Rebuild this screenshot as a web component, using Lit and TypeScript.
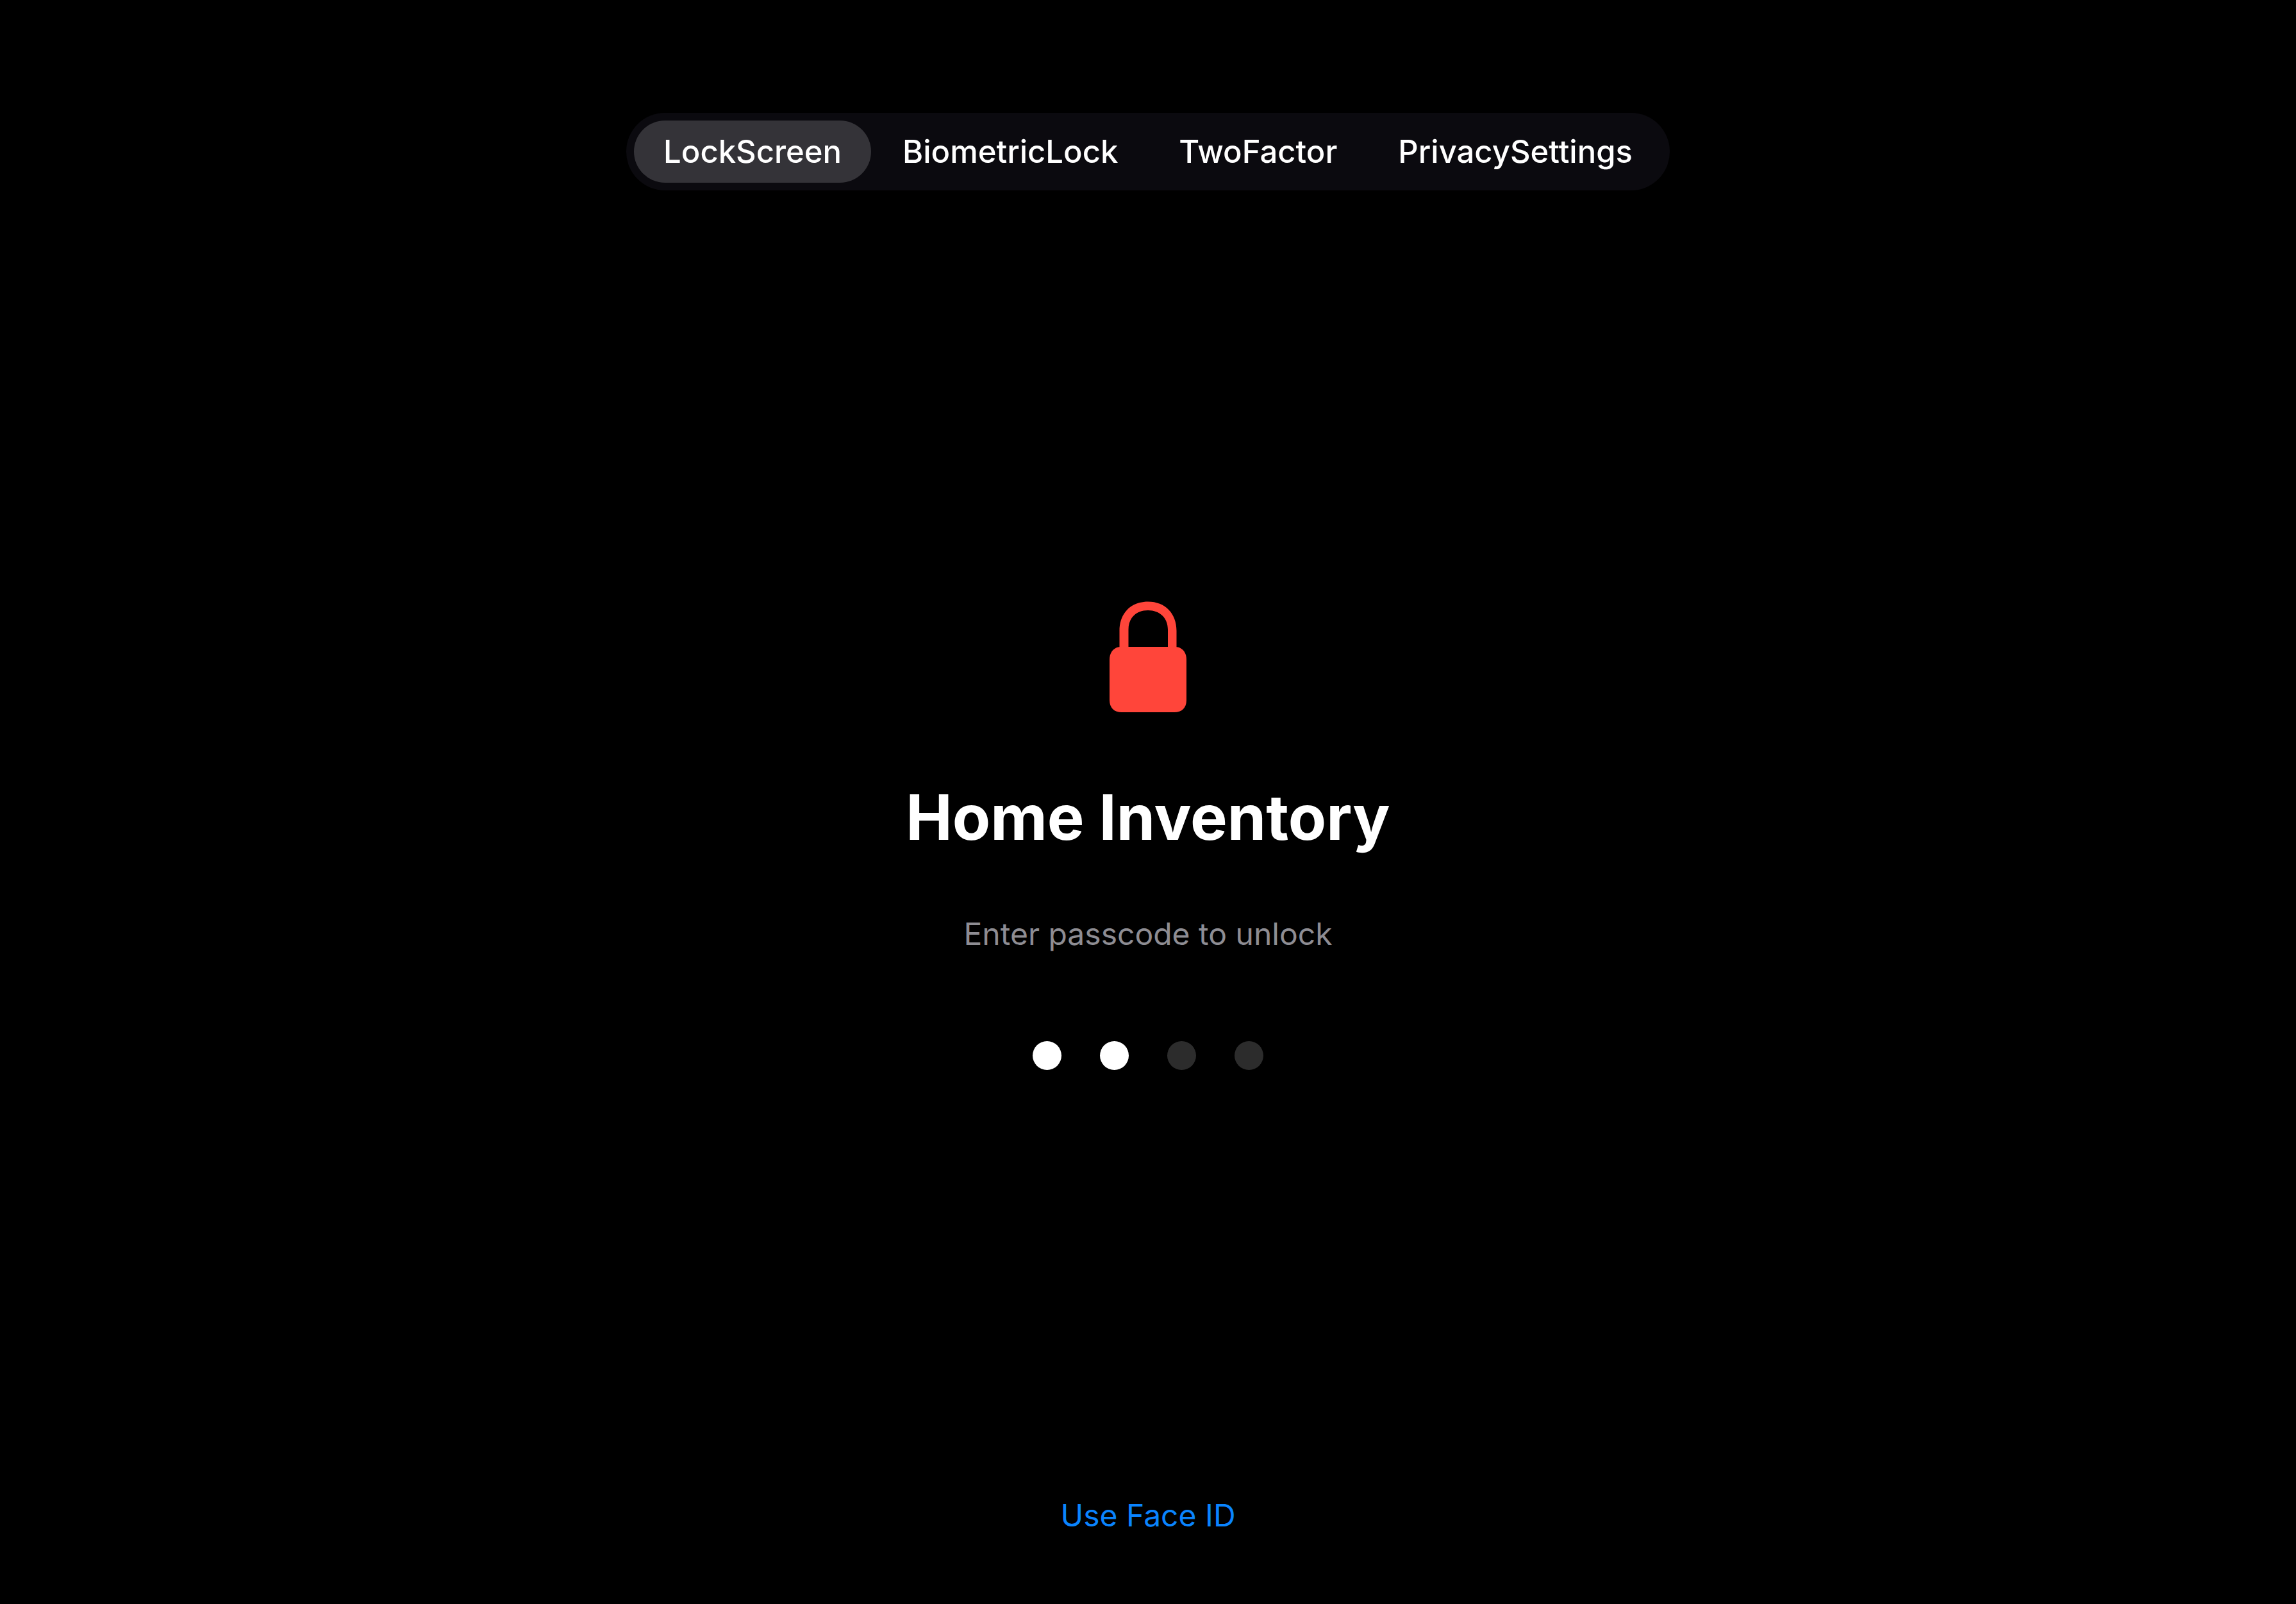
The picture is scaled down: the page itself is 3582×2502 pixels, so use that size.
import { LitElement, html, css } from "lit";
import { customElement, property, state } from "lit/decorators.js";
import { classMap } from "lit/directives/class-map.js";

@customElement("screen-tabs")
class ScreenTabs extends LitElement {
  @property({ type: Array }) labels: string[] = [];
  @state() private selected = 0;

  static styles = css`
    :host {
      display: block;
    }
    .bar {
      display: flex;
      gap: 3px;
      padding: 12px;
      border-radius: 61px;
      background: #0b0a0f;
    }
    .tab {
      margin: 0;
      padding: 18px 46px;
      border: 0;
      border-radius: 49px;
      background: transparent;
      color: #fff;
      font: 500 49px/61px Inter, "Liberation Sans", sans-serif;
      white-space: nowrap;
      cursor: pointer;
    }
    .selected {
      background: #343338;
    }
  `;

  render() {
    return html`
      <nav class="bar">
        ${this.labels.map(
          (label, i) => html`<button
            type="button"
            class=${classMap({ tab: true, selected: i === this.selected })}
            aria-pressed=${i === this.selected}
            @click=${() => (this.selected = i)}
          >${label}</button>`
        )}
      </nav>
    `;
  }
}

@customElement("passcode-dots")
class PasscodeDots extends LitElement {
  @property({ type: Number }) length = 4;
  @property({ type: Number }) entered = 0;

  static styles = css`
    :host {
      display: flex;
      gap: 60px;
    }
    .dot {
      width: 45px;
      height: 45px;
      border-radius: 50%;
      background: #2c2c2c;
    }
    .filled {
      background: #fff;
    }
  `;

  render() {
    return Array.from(
      { length: this.length },
      (_, i) => html`<span class=${classMap({ dot: true, filled: i < this.entered })}></span>`
    );
  }
}

@customElement("app-root")
class AppRoot extends LitElement {
  private screens = ["LockScreen", "BiometricLock", "TwoFactor", "PrivacySettings"];

  static styles = css`
    :host {
      display: flex;
      flex-direction: column;
      align-items: center;
      box-sizing: border-box;
      min-height: 100vh;
      padding: 176px 48px 108px;
      background: #000;
      color: #fff;
      font: 400 48px/61px Inter, "Liberation Sans", sans-serif;
    }
    .content {
      flex: 1;
      display: flex;
      flex-direction: column;
      align-items: center;
      justify-content: center;
      padding-bottom: 24px;
    }
    .lock {
      display: block;
      width: 120px;
      height: 174px;
      fill: #ff453a;
    }
    .title {
      margin: 102px 0 0;
      font-size: 97px;
      font-weight: 700;
      line-height: 122px;
    }
    .hint {
      margin: 90px 0 137px;
      color: #8e8d93;
    }
    .link {
      margin: 0;
      padding: 0;
      border: 0;
      background: none;
      color: #0a84ff;
      font: inherit;
      cursor: pointer;
    }
  `;

  render() {
    return html`
      <screen-tabs .labels=${this.screens}></screen-tabs>
      <main class="content">
        <svg class="lock" viewBox="0 0 120 174" aria-hidden="true">
          <path d="M15.5 74V46C15.5 19 33 .5 60 .5S104.500 19 104.500 46V74H91V44C91 26 78.500 14 60 14S29.500 26 29.500 44V74Z" />
          <path d="M18 71H102C113 71 120 79 120 91V154C120 166 113 173 101 173H19C7 173 0 166 0 154V91C0 79 7 71 18 71Z" />
        </svg>
        <h1 class="title">Home Inventory</h1>
        <p class="hint">Enter passcode to unlock</p>
        <passcode-dots length="4" entered="2"></passcode-dots>
      </main>
      <button type="button" class="link">Use Face ID</button>
    `;
  }
}
